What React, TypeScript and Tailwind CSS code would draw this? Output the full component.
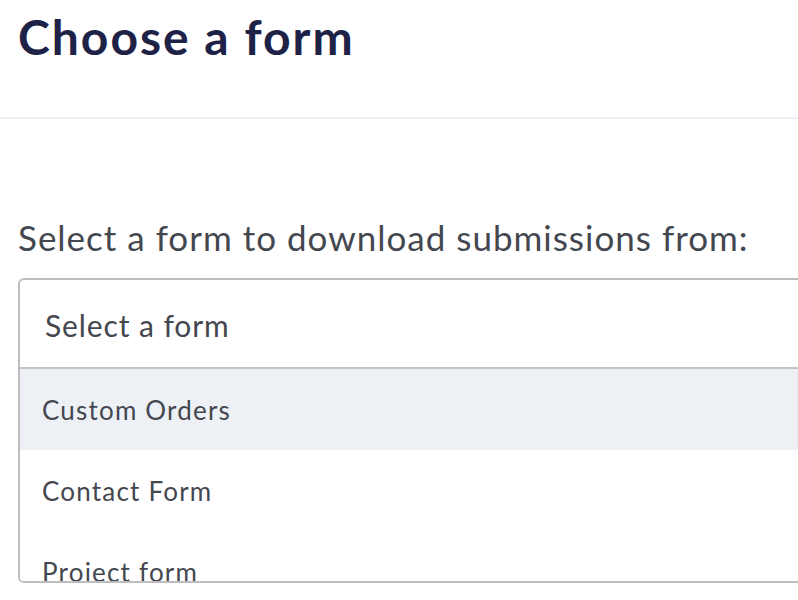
const OPTIONS = ['Custom Orders', 'Contact Form', 'Project form']

export default function App() {
  return (
    <div className="w-[798px] h-[600px] overflow-hidden bg-white" style={{ fontFamily: 'Lato, "Open Sans", sans-serif' }}>
      <div className="h-[119px] border-b-2 border-[#eef0f5] px-[18px] pt-[8px]">
        <h1 className="text-[48px] leading-[58px] font-bold text-[#1e2247] tracking-[2px]">Choose a form</h1>
      </div>
      <div className="pl-[18px] pt-[97px]">
        <p className="text-[35px] leading-[42px] text-[#44474f] tracking-[1px]">Select a form to download submissions from:</p>
        <div className="mt-[20px] w-[820px] h-[305px] border-2 border-[#bdbdbd] rounded-l-[6px] overflow-hidden flex flex-col">
          <div className="h-[89px] shrink-0 flex items-center pl-[25px] pt-[4px] border-b-2 border-[#c4c4c4] text-[30px] text-[#44474f] tracking-[0.9px]">
            Select a form
          </div>
          {OPTIONS.map((o, i) => (
            <div
              key={o}
              className={`h-[81px] shrink-0 flex items-center pl-[22px] pt-[2px] text-[26px] text-[#44474f] tracking-[1.2px] ${i === 0 ? 'bg-[#edf1f6]' : 'bg-white'}`}
            >
              {o}
            </div>
          ))}
        </div>
      </div>
    </div>
  )
}
